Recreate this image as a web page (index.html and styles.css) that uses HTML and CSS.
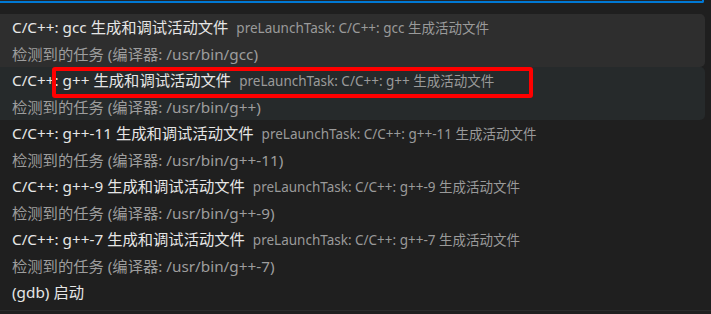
FILE: index.html
```html
<!DOCTYPE html>
<html lang="zh-CN">
<head>
    <meta charset="UTF-8">
    <title>选择调试配置</title>
    <link rel="stylesheet" href="styles.css">
</head>
<body>
    <div class="quick-input">
        <div class="input-box"></div>
        <div class="list">
            <div class="item hovered">
                <div class="label">C/C++: gcc 生成和调试活动文件<span class="desc">preLaunchTask: C/C++: gcc 生成活动文件</span></div>
                <div class="detail">检测到的任务 (编译器: /usr/bin/gcc)</div>
            </div>
            <div class="item focused">
                <div class="label">C/C++: g++ 生成和调试活动文件<span class="desc">preLaunchTask: C/C++: g++ 生成活动文件</span></div>
                <div class="detail">检测到的任务 (编译器: /usr/bin/g++)</div>
            </div>
            <div class="item">
                <div class="label">C/C++: g++-11 生成和调试活动文件<span class="desc">preLaunchTask: C/C++: g++-11 生成活动文件</span></div>
                <div class="detail">检测到的任务 (编译器: /usr/bin/g++-11)</div>
            </div>
            <div class="item">
                <div class="label">C/C++: g++-9 生成和调试活动文件<span class="desc">preLaunchTask: C/C++: g++-9 生成活动文件</span></div>
                <div class="detail">检测到的任务 (编译器: /usr/bin/g++-9)</div>
            </div>
            <div class="item">
                <div class="label">C/C++: g++-7 生成和调试活动文件<span class="desc">preLaunchTask: C/C++: g++-7 生成活动文件</span></div>
                <div class="detail">检测到的任务 (编译器: /usr/bin/g++-7)</div>
            </div>
            <div class="item">
                <div class="label">(gdb) 启动</div>
            </div>
        </div>
        <div class="bottom-line"></div>
        <div class="annotation"></div>
    </div>
</body>
</html>
```

FILE: styles.css
```css
body {
    margin: 0;
    background: #1f1f1f;
    font-family: 'Noto Sans', 'Noto Sans CJK SC', sans-serif;
    overflow: hidden;
}
.quick-input {
    position: relative;
    width: 711px;
    height: 314px;
}
.input-box {
    width: 702px;
    height: 1px;
    background: #252526;
    border-bottom: 2px solid #0078d4;
    border-right: 2px solid #0078d4;
    border-bottom-right-radius: 2px;
}
.list {
    margin-top: 11px;
    width: 705px;
}
.item {
    padding-left: 12px;
    border-radius: 0 5px 5px 0;
}
.item.hovered {
    background: #2e2e2e;
}
.item.focused {
    background: #262a2b;
}
.label, .detail {
    height: 26.5px;
    line-height: 26.5px;
    font-size: 15.3px;
    white-space: nowrap;
}
.label {
    color: #e6e6e6;
}
.desc {
    margin-left: 8px;
    font-size: 13.5px;
    color: #9a9a9a;
}
.detail {
    color: #9d9d9d;
}
.bottom-line {
    margin-top: 4px;
    height: 1px;
    background: #2b2b2b;
}
.annotation {
    position: absolute;
    left: 52px;
    top: 67px;
    width: 473px;
    height: 23px;
    border: 4px solid #ff0000;
    border-radius: 3px;
}
```
